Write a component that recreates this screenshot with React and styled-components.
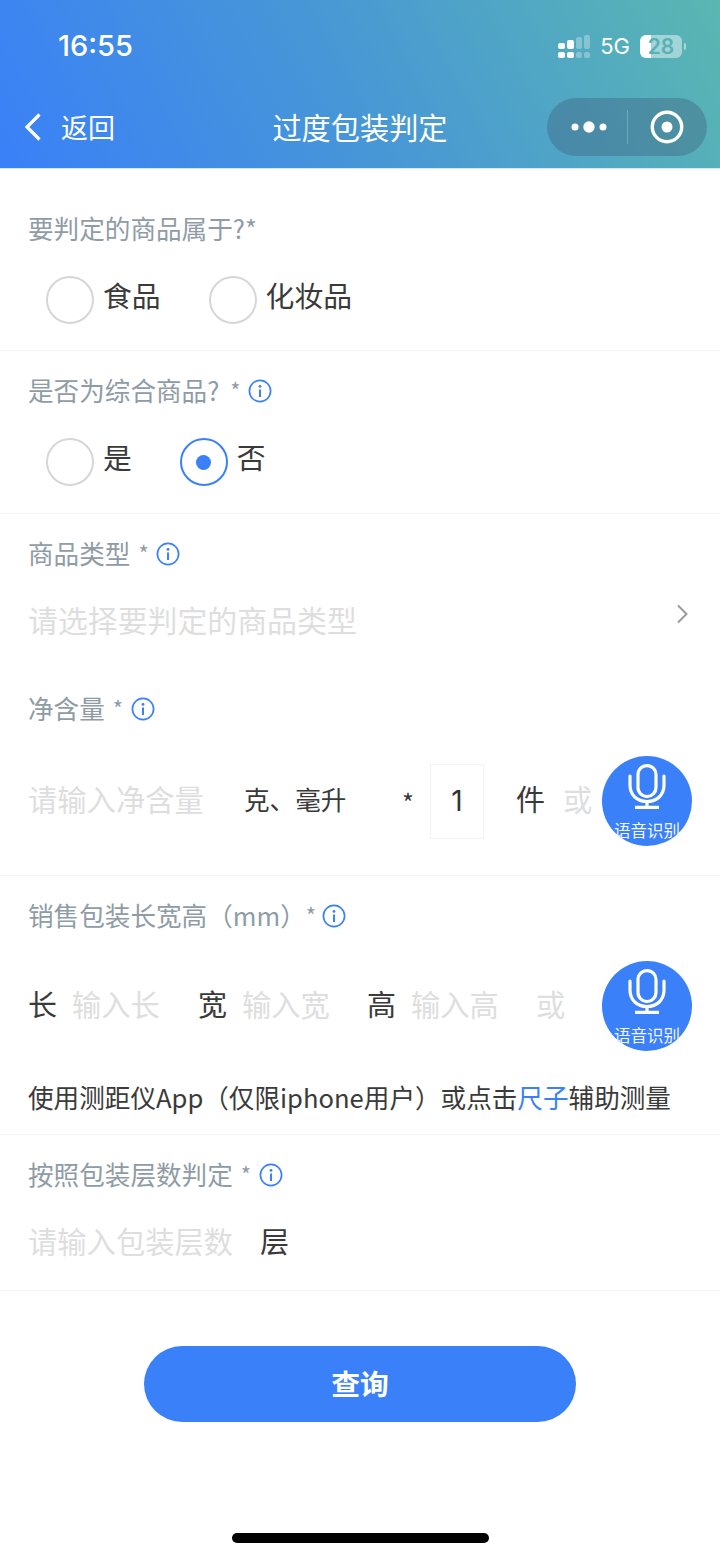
import React, { useState } from "react";
import styled, { createGlobalStyle } from "styled-components";

const GlobalStyle = createGlobalStyle`
  html, body {
    margin: 0;
    padding: 0;
    background: #fff;
  }
  body {
    font-family: "Noto Sans CJK SC", "Noto Sans", sans-serif;
  }
`;

const Page = styled.div`
  position: relative;
  width: 720px;
  height: 1558px;
  overflow: hidden;
  background: #fff;
`;

const Header = styled.header`
  height: 169px;
  box-sizing: border-box;
  background: linear-gradient(62deg, #3a80f8 0%, #4797d6 48%, #5ab7b1 100%);
  border-bottom: 1px solid #d5e6f5;
  color: #fff;
`;

const StatusBar = styled.div`
  height: 98px;
  box-sizing: border-box;
  padding: 28px 34px 0 58px;
  display: flex;
  align-items: flex-start;
  justify-content: space-between;
`;

const Clock = styled.span`
  font-family: "Inter", "Liberation Sans", sans-serif;
  font-size: 29px;
  line-height: 36px;
  font-weight: 500;
`;

const StatusRight = styled.div`
  display: flex;
  align-items: center;
  height: 36px;
`;

const Network = styled.span`
  font-family: "Inter", "Liberation Sans", sans-serif;
  font-size: 22px;
  margin: 0 10px 0 10px;
`;

const Battery = styled.span`
  width: 42px;
  height: 23px;
  border-radius: 6px;
  background: linear-gradient(90deg, #fff 0 26%, rgba(255, 255, 255, 0.45) 26% 100%);
  color: #58b1b5;
  font-family: "Inter", "Liberation Sans", sans-serif;
  font-size: 21px;
  font-weight: 600;
  line-height: 23px;
  text-align: center;
`;

const BatteryTip = styled.span`
  width: 2px;
  height: 7px;
  margin-left: 2px;
  border-radius: 0 2px 2px 0;
  background: rgba(255, 255, 255, 0.5);
`;

const NavBar = styled.div`
  position: relative;
  height: 70px;
  display: flex;
  align-items: flex-start;
  justify-content: center;
`;

const BackLink = styled.div`
  position: absolute;
  left: 24px;
  top: 14px;
  display: flex;
  align-items: center;
  font-size: 27px;
  line-height: 30px;
  gap: 19px;
`;

const NavTitle = styled.h1`
  margin: 8px 0 0;
  font-size: 29.2px;
  line-height: 40px;
  font-weight: 400;
`;

const Capsule = styled.div`
  position: absolute;
  right: 13px;
  top: 0;
  width: 160px;
  height: 58px;
  border-radius: 29px;
  background: rgba(60, 90, 120, 0.36);
  display: flex;
  align-items: center;
`;

const CapsuleHalf = styled.div`
  flex: 1;
  height: 100%;
  display: flex;
  align-items: center;
  justify-content: center;
`;

const MenuDots = styled.svg`
  margin-left: 4px;
`;

const CapsuleDivider = styled.span`
  width: 1px;
  height: 34px;
  background: rgba(255, 255, 255, 0.22);
`;

const Section = styled.section`
  padding: ${(p) => p.$pad || "0"};
  border-bottom: ${(p) => (p.$line ? "1px solid #f3f3f3" : "none")};
`;

const Label = styled.div`
  display: flex;
  align-items: center;
  height: 36px;
  box-sizing: border-box;
  padding: 0 0 4px 28px;
  font-size: 25.6px;
  color: #8f9ca6;
`;

const Star = styled.span`
  margin-left: ${(p) => p.$gap ?? 8}px;
  font-size: 22px;
`;

const InfoIcon = styled.svg`
  width: 24px;
  height: 24px;
  margin: 0 0 -4px ${(p) => p.$gap ?? 8}px;
`;

const RadioRow = styled.div`
  display: flex;
  align-items: center;
  padding-left: 46px;
  margin-top: ${(p) => p.$top}px;
`;

const RadioItem = styled.label`
  display: flex;
  align-items: center;
  margin-right: ${(p) => p.$after}px;
`;

const RadioText = styled.span`
  font-size: 28.8px;
  line-height: 38px;
  padding-bottom: 10px;
  color: #3a3a3a;
`;

const RadioCircle = styled.span`
  width: 48px;
  height: 48px;
  box-sizing: border-box;
  margin-right: 9px;
  border-radius: 50%;
  border: 2px solid ${(p) => (p.$on ? "#3a80f8" : "#d6d6d6")};
  display: flex;
  align-items: center;
  justify-content: center;

  &::after {
    content: "";
    display: ${(p) => (p.$on ? "block" : "none")};
    width: 15px;
    height: 15px;
    border-radius: 50%;
    background: #3a80f8;
  }
`;

const Hint = styled.span`
  font-size: ${(p) => p.$size || 29.3}px;
  color: #dedede;
  white-space: nowrap;
  padding-bottom: 6px;
  width: ${(p) => (p.$w ? `${p.$w}px` : "auto")};
  margin-left: ${(p) => p.$left || 0}px;
  flex: none;
`;

const SelectRow = styled.div`
  display: flex;
  align-items: center;
  justify-content: space-between;
  padding: 0 30px 0 28px;
  margin-top: 32px;
  height: 36px;
`;

const Chevron = styled.svg`
  width: 14px;
  height: 20px;
  margin-top: -16px;
`;

const InputRow = styled.div`
  position: relative;
  display: flex;
  align-items: center;
  height: 90px;
  padding-left: 28px;
  margin-top: ${(p) => p.$top}px;
`;

const LayerRow = styled.div`
  display: flex;
  align-items: center;
  height: 40px;
  padding-left: 28px;
  margin-top: 30px;
`;

const Unit = styled.span`
  flex: none;
  font-size: ${(p) => p.$size || 25.6}px;
  color: #3a3a3a;
  white-space: nowrap;
  padding-bottom: 6px;
  width: ${(p) => (p.$w ? `${p.$w}px` : "auto")};
  margin-left: ${(p) => p.$left || 0}px;
`;

const TimesMark = styled.span`
  flex: none;
  font-size: 25.6px;
  color: #3a3a3a;
`;

const CountBox = styled.span`
  flex: none;
  width: 54px;
  height: 75px;
  box-sizing: border-box;
  margin-left: 16px;
  border: 1px solid #f2f2f2;
  display: flex;
  align-items: center;
  justify-content: center;
  font-family: "Inter", "Liberation Sans", sans-serif;
  font-size: 28px;
  color: #333;
`;

const VoiceButton = styled.button`
  position: absolute;
  left: 602px;
  top: 0;
  width: 90px;
  height: 90px;
  padding: 8px 0 0;
  border: none;
  border-radius: 50%;
  background: #3a80f8;
  color: #f2f6ff;
  font-family: inherit;
  font-size: 16.5px;
  line-height: 24px;
  display: flex;
  flex-direction: column;
  align-items: center;
  white-space: nowrap;
`;

const MicIcon = styled.svg`
  width: 38px;
  height: 45px;
  margin-bottom: 9px;
  flex: none;
`;

const HelperText = styled.p`
  margin: 28px 0 0;
  padding-left: 28px;
  font-size: 25.6px;
  line-height: 36px;
  color: #3a3a3a;
  white-space: nowrap;
`;

const RulerLink = styled.span`
  color: #3a80f8;
`;

const SubmitButton = styled.button`
  display: block;
  width: 432px;
  height: 76px;
  margin: 55px auto 0;
  padding: 0 0 4px;
  border: none;
  border-radius: 38px;
  background: #3a80f8;
  color: #fff;
  font-family: inherit;
  font-size: 28.8px;
  font-weight: 700;
`;

const HomeBar = styled.div`
  position: absolute;
  left: 232px;
  bottom: 15px;
  width: 257px;
  height: 10px;
  border-radius: 5px;
  background: #000;
`;

const SignalIcon = () => (
  <svg width="32" height="23" viewBox="0 0 32 23" fill="#fff">
    <rect x="0" y="8" width="7" height="6" rx="2" />
    <rect x="0" y="17" width="7" height="6" rx="2" />
    <rect x="9" y="5" width="7" height="9" rx="2" />
    <rect x="9" y="17" width="7" height="6" rx="2" />
    <rect x="18" y="2" width="6" height="12" rx="2" opacity="0.3" />
    <rect x="18" y="17" width="6" height="6" rx="2" opacity="0.3" />
    <rect x="26" y="0" width="6" height="14" rx="2" opacity="0.3" />
    <rect x="26" y="17" width="6" height="6" rx="2" opacity="0.3" />
  </svg>
);

const Info = ({ gap }) => (
  <InfoIcon $gap={gap} viewBox="0 0 24 24" fill="none" stroke="#3a80f8">
    <circle cx="12" cy="12" r="10.6" strokeWidth="1.7" />
    <circle cx="12" cy="7.4" r="1.4" fill="#3a80f8" stroke="none" />
    <path d="M12 10.6v7.4" strokeWidth="2" />
  </InfoIcon>
);

const VoiceInput = () => (
  <VoiceButton type="button">
    <MicIcon viewBox="0 0 38 45" fill="none" stroke="#fff" strokeWidth="3.2">
      <rect x="10" y="1.6" width="18" height="31" rx="9" />
      <path d="M2 12v9c0 10 7 16.500 17 16.500S36 31 36 21v-9" strokeLinecap="round" />
      <path d="M19 38v5M7 43.400h24" />
    </MicIcon>
    语音识别
  </VoiceButton>
);

export default function App() {
  const [category, setCategory] = useState(null);
  const [mixed, setMixed] = useState(false);

  return (
    <Page>
      <GlobalStyle />
      <Header>
        <StatusBar>
          <Clock>16:55</Clock>
          <StatusRight>
            <SignalIcon />
            <Network>5G</Network>
            <Battery>28</Battery>
            <BatteryTip />
          </StatusRight>
        </StatusBar>
        <NavBar>
          <BackLink>
            <svg width="18" height="28" viewBox="0 0 18 28" fill="none" stroke="#fff" strokeWidth="3.2">
              <path d="M15.500 1.500 3 14l12.500 12.500" />
            </svg>
            返回
          </BackLink>
          <NavTitle>过度包装判定</NavTitle>
          <Capsule>
            <CapsuleHalf>
              <MenuDots width="36" height="14" viewBox="0 0 36 14" fill="#fff">
                <circle cx="4" cy="7" r="3.500" />
                <circle cx="18" cy="7" r="5.700" />
                <circle cx="32" cy="7" r="3.500" />
              </MenuDots>
            </CapsuleHalf>
            <CapsuleDivider />
            <CapsuleHalf>
              <svg width="34" height="34" viewBox="0 0 34 34" fill="none">
                <circle cx="17" cy="17" r="14.700" stroke="#fff" strokeWidth="3.400" />
                <circle cx="17" cy="17" r="5.500" fill="#fff" />
              </svg>
            </CapsuleHalf>
          </Capsule>
        </NavBar>
      </Header>

      <Section $line $pad="42px 0 26px">
        <Label>要判定的商品属于?*</Label>
        <RadioRow $top={29}>
          <RadioItem $after={48} onClick={() => setCategory("food")}>
            <RadioCircle $on={category === "food"} />
            <RadioText>食品</RadioText>
          </RadioItem>
          <RadioItem $after={0} onClick={() => setCategory("cosmetic")}>
            <RadioCircle $on={category === "cosmetic"} />
            <RadioText>化妆品</RadioText>
          </RadioItem>
        </RadioRow>
      </Section>

      <Section $line $pad="22px 0 27px">
        <Label>
          是否为综合商品?<Star $gap={11}>*</Star>
          <Info gap={7} />
        </Label>
        <RadioRow $top={29}>
          <RadioItem $after={48} onClick={() => setMixed(true)}>
            <RadioCircle $on={mixed} />
            <RadioText>是</RadioText>
          </RadioItem>
          <RadioItem $after={0} onClick={() => setMixed(false)}>
            <RadioCircle $on={!mixed} />
            <RadioText>否</RadioText>
          </RadioItem>
        </RadioRow>
      </Section>

      <Section $pad="22px 0 0">
        <Label>
          商品类型<Star>*</Star>
          <Info gap={7} />
        </Label>
        <SelectRow>
          <Hint $size={29.9}>请选择要判定的商品类型</Hint>
          <Chevron viewBox="0 0 14 20" fill="none" stroke="#9a9a9a" strokeWidth="2">
            <path d="M2 1.500 10.500 10 2 18.500" />
          </Chevron>
        </SelectRow>
      </Section>

      <Section $line $pad="51px 0 29px">
        <Label>
          净含量<Star>*</Star>
          <Info />
        </Label>
        <InputRow $top={29}>
          <Hint $w={216}>请输入净含量</Hint>
          <Unit $w={158}>克、毫升</Unit>
          <TimesMark>*</TimesMark>
          <CountBox>1</CountBox>
          <Unit $size={29} $left={32}>件</Unit>
          <Hint $left={18}>或</Hint>
          <VoiceInput />
        </InputRow>
      </Section>

      <Section $line $pad="22px 0 19px">
        <Label>
          销售包装长宽高（mm）<Star $gap={0}>*</Star>
          <Info gap={6} />
        </Label>
        <InputRow $top={27}>
          <Unit $size={29} $w={44}>长</Unit>
          <Hint $w={126}>输入长</Hint>
          <Unit $size={29} $w={44}>宽</Unit>
          <Hint $w={125}>输入宽</Hint>
          <Unit $size={29} $w={44}>高</Unit>
          <Hint $w={125}>输入高</Hint>
          <Hint>或</Hint>
          <VoiceInput />
        </InputRow>
        <HelperText>
          使用测距仪App（仅限iphone用户）或点击<RulerLink>尺子</RulerLink>辅助测量
        </HelperText>
      </Section>

      <Section $line $pad="22px 0 27px">
        <Label>
          按照包装层数判定<Star>*</Star>
          <Info />
        </Label>
        <LayerRow>
          <Hint $w={232}>请输入包装层数</Hint>
          <Unit $size={29}>层</Unit>
        </LayerRow>
      </Section>

      <SubmitButton type="button">查询</SubmitButton>
      <HomeBar />
    </Page>
  );
}
